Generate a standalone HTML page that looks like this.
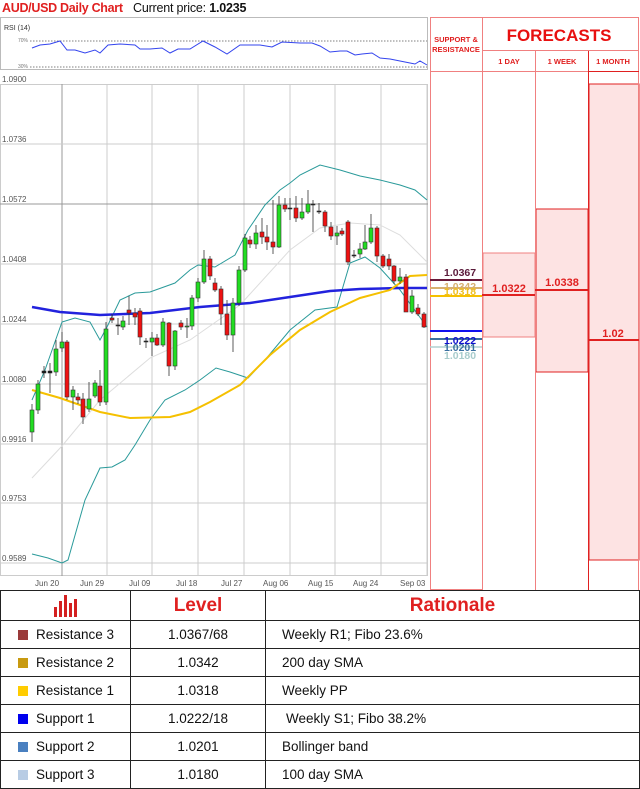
<!DOCTYPE html>
<html><head><meta charset="utf-8"><style>
*{margin:0;padding:0;box-sizing:border-box}
body{width:640px;height:787px;background:#fff;position:relative;overflow:hidden;font-family:"Liberation Sans",sans-serif}
.t{position:absolute;white-space:nowrap}
table{position:absolute;left:0;top:590px;width:640px;border-collapse:collapse;table-layout:fixed}
td{border:1px solid #222;height:28px;font-size:13.5px;color:#111;padding:0}
.sq{display:inline-block;width:10px;height:10px;margin:0 8px 0 17px;vertical-align:-1px}
</style></head><body>
<div class="t" style="left:2px;top:1px;font-size:12.5px;font-weight:bold;color:#e02020;letter-spacing:-0.3px">AUD/USD Daily Chart</div>
<div class="t" style="left:133px;top:1px;font-size:12.5px;color:#111;letter-spacing:-0.2px">Current price: <b>1.0235</b></div>

<svg width="640" height="590" style="position:absolute;left:0;top:0" font-family="Liberation Sans, sans-serif">
<rect x="0.5" y="17.5" width="427" height="52" fill="#fff" stroke="#bbb"/>
<text x="4" y="30" font-size="7" fill="#333">RSI (14)</text>
<text x="18" y="42" font-size="5" fill="#777">70%</text>
<text x="18" y="68" font-size="5" fill="#777">30%</text>
<line x1="30" y1="41" x2="427" y2="41" stroke="#555" stroke-dasharray="1.5,1.5" stroke-width="0.8"/>
<line x1="30" y1="67" x2="427" y2="67" stroke="#555" stroke-dasharray="1.5,1.5" stroke-width="0.8"/>
<polyline fill="none" stroke="#3344ee" stroke-width="1" points="32,48 40,45 50,44 60,41 67,50 75,50 85,53 95,50 100,53 108,45 120,44 135,45 140,49 150,49 162,48 170,53 178,49 190,49 203,41 215,47 227,54 240,45 260,45 272,47 282,42 300,43 312,43 320,46 330,52 340,51 347,51 355,55 362,54 372,53 380,58 390,59 400,61 410,63 415,64 420,61 427,65"/>
<rect x="0.5" y="84.5" width="427" height="491" fill="#fff" stroke="#ccc"/>
<g stroke="#ccc" stroke-width="1">
<line x1="62" y1="84" x2="62" y2="576" stroke="#999"/><line x1="107" y1="84" x2="107" y2="576"/><line x1="152" y1="84" x2="152" y2="576"/><line x1="198" y1="84" x2="198" y2="576"/><line x1="244" y1="84" x2="244" y2="576"/><line x1="290" y1="84" x2="290" y2="576"/><line x1="335" y1="84" x2="335" y2="576"/><line x1="381" y1="84" x2="381" y2="576"/><line x1="427" y1="84" x2="427" y2="576"/>
<line x1="0" y1="144" x2="428" y2="144"/><line x1="0" y1="204" x2="428" y2="204" stroke="#999"/><line x1="0" y1="264" x2="428" y2="264"/><line x1="0" y1="324" x2="428" y2="324"/><line x1="0" y1="384" x2="428" y2="384"/><line x1="0" y1="444" x2="428" y2="444"/><line x1="0" y1="503" x2="428" y2="503"/><line x1="0" y1="563" x2="428" y2="563"/>
</g>
<g font-size="8" fill="#555">
<text x="2" y="82">1.0900</text><text x="2" y="142">1.0736</text><text x="2" y="202">1.0572</text><text x="2" y="262">1.0408</text><text x="2" y="322">1.0244</text><text x="2" y="382">1.0080</text><text x="2" y="442">0.9916</text><text x="2" y="501">0.9753</text><text x="2" y="561">0.9589</text>
<text x="35" y="586">Jun 20</text><text x="80" y="586">Jun 29</text><text x="129" y="586">Jul 09</text><text x="176" y="586">Jul 18</text><text x="221" y="586">Jul 27</text><text x="263" y="586">Aug 06</text><text x="308" y="586">Aug 15</text><text x="353" y="586">Aug 24</text><text x="400" y="586">Sep 03</text>
</g>
<polyline fill="none" stroke="#ddd" stroke-width="1" points="32,478 62,446 100,400 150,358 190,340 240,305 290,250 320,228 350,223 380,225 400,235 427,262"/>
<polyline fill="none" stroke="#2a9a9a" stroke-width="1" points="32,400 45,370 62,322 75,318 90,322 100,340 107,327 120,300 135,293 150,292 175,283 190,270 198,265 215,267 235,255 248,230 265,205 280,190 290,183 300,175 320,165 340,170 360,176 380,180 400,185 415,190 427,200"/>
<polyline fill="none" stroke="#2a9a9a" stroke-width="1" points="32,554 48,558 62,563 68,560 85,500 100,468 112,467 125,460 135,445 150,420 165,400 185,390 200,380 216,368 230,372 248,378 265,360 290,330 315,310 337,307 350,263 365,257 380,268 400,290 427,327"/>
<polyline fill="none" stroke="#2222dd" stroke-width="2.5" points="32,307 60,312 100,315 150,313 200,307 250,303 290,297 330,291 360,289 400,288 427,288"/>
<polyline fill="none" stroke="#f5c000" stroke-width="2" points="32,390 60,398 100,412 130,418 170,417 190,412 210,402 240,385 270,355 300,330 330,312 360,298 390,290 410,276 427,275"/>
<g stroke="#333" stroke-width="0.8">
<line x1="32" y1="404" x2="32" y2="442"/><line x1="38" y1="380" x2="38" y2="414"/><line x1="44" y1="366" x2="44" y2="378"/><line x1="50" y1="363" x2="50" y2="393"/><line x1="56" y1="340" x2="56" y2="376"/><line x1="62" y1="332" x2="62" y2="352"/><line x1="67" y1="340" x2="67" y2="400"/><line x1="73" y1="386" x2="73" y2="410"/><line x1="78" y1="393" x2="78" y2="404"/><line x1="83" y1="393" x2="83" y2="424"/><line x1="89" y1="382" x2="89" y2="412"/><line x1="95" y1="380" x2="95" y2="398"/><line x1="100" y1="370" x2="100" y2="406"/><line x1="106" y1="322" x2="106" y2="405"/><line x1="112" y1="314" x2="112" y2="323"/><line x1="118" y1="318" x2="118" y2="335"/><line x1="123" y1="316" x2="123" y2="330"/><line x1="129" y1="296" x2="129" y2="325"/><line x1="135" y1="308" x2="135" y2="325"/><line x1="140" y1="308" x2="140" y2="345"/><line x1="146" y1="338" x2="146" y2="348"/><line x1="152" y1="332" x2="152" y2="356"/><line x1="157" y1="334" x2="157" y2="346"/><line x1="163" y1="318" x2="163" y2="347"/><line x1="169" y1="322" x2="169" y2="376"/><line x1="175" y1="330" x2="175" y2="370"/><line x1="181" y1="320" x2="181" y2="330"/><line x1="187" y1="318" x2="187" y2="338"/><line x1="192" y1="295" x2="192" y2="330"/><line x1="198" y1="278" x2="198" y2="302"/><line x1="204" y1="250" x2="204" y2="284"/><line x1="210" y1="256" x2="210" y2="280"/><line x1="215" y1="278" x2="215" y2="292"/><line x1="221" y1="286" x2="221" y2="325"/><line x1="227" y1="300" x2="227" y2="340"/><line x1="233" y1="298" x2="233" y2="352"/><line x1="239" y1="266" x2="239" y2="306"/><line x1="245" y1="234" x2="245" y2="272"/><line x1="250" y1="236" x2="250" y2="248"/><line x1="256" y1="225" x2="256" y2="249"/><line x1="262" y1="218" x2="262" y2="244"/><line x1="267" y1="225" x2="267" y2="250"/><line x1="273" y1="200" x2="273" y2="254"/><line x1="279" y1="196" x2="279" y2="248"/><line x1="285" y1="198" x2="285" y2="212"/><line x1="290" y1="198" x2="290" y2="220"/><line x1="296" y1="196" x2="296" y2="222"/><line x1="302" y1="198" x2="302" y2="220"/><line x1="308" y1="190" x2="308" y2="214"/><line x1="313" y1="200" x2="313" y2="232"/><line x1="319" y1="203" x2="319" y2="214"/><line x1="325" y1="210" x2="325" y2="232"/><line x1="331" y1="222" x2="331" y2="240"/><line x1="337" y1="226" x2="337" y2="245"/><line x1="342" y1="228" x2="342" y2="236"/><line x1="348" y1="220" x2="348" y2="265"/><line x1="354" y1="250" x2="354" y2="258"/><line x1="360" y1="243" x2="360" y2="258"/><line x1="365" y1="225" x2="365" y2="250"/><line x1="371" y1="214" x2="371" y2="244"/><line x1="377" y1="226" x2="377" y2="262"/><line x1="383" y1="254" x2="383" y2="268"/><line x1="389" y1="254" x2="389" y2="270"/><line x1="394" y1="265" x2="394" y2="284"/><line x1="400" y1="268" x2="400" y2="284"/><line x1="406" y1="274" x2="406" y2="312"/><line x1="412" y1="290" x2="412" y2="314"/><line x1="418" y1="304" x2="418" y2="316"/><line x1="424" y1="312" x2="424" y2="328"/>
</g>
<g stroke="#333" stroke-width="0.6">
<rect x="30" y="410" width="4" height="22" fill="#22dd22"/><rect x="36" y="384" width="4" height="26" fill="#22dd22"/><rect x="42" y="371" width="4" height="2" fill="#111"/><rect x="48" y="371" width="4" height="2" fill="#111"/><rect x="54" y="349" width="4" height="23" fill="#22dd22"/><rect x="60" y="342" width="4" height="6" fill="#22dd22"/><rect x="65" y="342" width="4" height="55" fill="#ee1111"/><rect x="71" y="390" width="4" height="7" fill="#22dd22"/><rect x="76" y="397" width="4" height="3" fill="#ee1111"/><rect x="81" y="399" width="4" height="18" fill="#ee1111"/><rect x="87" y="399" width="4" height="10" fill="#22dd22"/><rect x="93" y="383" width="4" height="13" fill="#22dd22"/><rect x="98" y="386" width="4" height="16" fill="#ee1111"/><rect x="104" y="329" width="4" height="73" fill="#22dd22"/><rect x="110" y="318" width="4" height="2" fill="#ee1111"/><rect x="116" y="325" width="4" height="1" fill="#111"/><rect x="121" y="321" width="4" height="6" fill="#22dd22"/><rect x="127" y="310" width="4" height="3" fill="#ee1111"/><rect x="133" y="313" width="4" height="4" fill="#ee1111"/><rect x="138" y="311" width="4" height="26" fill="#ee1111"/><rect x="144" y="341" width="4" height="1" fill="#111"/><rect x="150" y="338" width="4" height="4" fill="#22dd22"/><rect x="155" y="338" width="4" height="7" fill="#ee1111"/><rect x="161" y="322" width="4" height="23" fill="#22dd22"/><rect x="167" y="323" width="4" height="43" fill="#ee1111"/><rect x="173" y="331" width="4" height="35" fill="#22dd22"/><rect x="179" y="323" width="4" height="4" fill="#ee1111"/><rect x="185" y="326" width="4" height="1" fill="#22dd22"/><rect x="190" y="298" width="4" height="28" fill="#22dd22"/><rect x="196" y="282" width="4" height="16" fill="#22dd22"/><rect x="202" y="259" width="4" height="23" fill="#22dd22"/><rect x="208" y="259" width="4" height="17" fill="#ee1111"/><rect x="213" y="283" width="4" height="7" fill="#ee1111"/><rect x="219" y="289" width="4" height="25" fill="#ee1111"/><rect x="225" y="314" width="4" height="21" fill="#ee1111"/><rect x="231" y="303" width="4" height="32" fill="#22dd22"/><rect x="237" y="270" width="4" height="33" fill="#22dd22"/><rect x="243" y="238" width="4" height="32" fill="#22dd22"/><rect x="248" y="240" width="4" height="4" fill="#ee1111"/><rect x="254" y="233" width="4" height="11" fill="#22dd22"/><rect x="260" y="232" width="4" height="5" fill="#ee1111"/><rect x="265" y="237" width="4" height="5" fill="#ee1111"/><rect x="271" y="242" width="4" height="5" fill="#ee1111"/><rect x="277" y="205" width="4" height="42" fill="#22dd22"/><rect x="283" y="205" width="4" height="4" fill="#ee1111"/><rect x="288" y="208" width="4" height="1" fill="#111"/><rect x="294" y="208" width="4" height="10" fill="#ee1111"/><rect x="300" y="212" width="4" height="6" fill="#22dd22"/><rect x="306" y="204" width="4" height="8" fill="#22dd22"/><rect x="311" y="204" width="4" height="1" fill="#111"/><rect x="317" y="211" width="4" height="1" fill="#111"/><rect x="323" y="212" width="4" height="14" fill="#ee1111"/><rect x="329" y="227" width="4" height="9" fill="#ee1111"/><rect x="335" y="233" width="4" height="3" fill="#22dd22"/><rect x="340" y="231" width="4" height="3" fill="#ee1111"/><rect x="346" y="222" width="4" height="40" fill="#ee1111"/><rect x="352" y="255" width="4" height="1" fill="#111"/><rect x="358" y="249" width="4" height="5" fill="#22dd22"/><rect x="363" y="242" width="4" height="7" fill="#22dd22"/><rect x="369" y="228" width="4" height="14" fill="#22dd22"/><rect x="375" y="228" width="4" height="28" fill="#ee1111"/><rect x="381" y="256" width="4" height="10" fill="#ee1111"/><rect x="387" y="259" width="4" height="7" fill="#ee1111"/><rect x="392" y="266" width="4" height="15" fill="#ee1111"/><rect x="398" y="277" width="4" height="4" fill="#22dd22"/><rect x="404" y="277" width="4" height="35" fill="#ee1111"/><rect x="410" y="296" width="4" height="16" fill="#22dd22"/><rect x="416" y="308" width="4" height="6" fill="#ee1111"/><rect x="422" y="314" width="4" height="13" fill="#ee1111"/>
</g>
<rect x="483" y="253" width="52" height="84" fill="#fde3e3" stroke="#f08080"/>
<rect x="536" y="209" width="52" height="163" fill="#fde3e3" stroke="#e02020"/>
<rect x="589" y="84" width="50" height="476" fill="#fde3e3" stroke="#e02020"/>
<g stroke="#f08080" fill="none">
<rect x="430.5" y="17.5" width="52" height="572"/>
<line x1="482.5" y1="17" x2="482.5" y2="590"/><line x1="535.5" y1="50" x2="535.5" y2="590"/><line x1="588.5" y1="50" x2="588.5" y2="590" stroke="#e02020"/><line x1="638.5" y1="17" x2="638.5" y2="590"/>
<line x1="482" y1="17.5" x2="639" y2="17.5"/><line x1="482" y1="50.5" x2="639" y2="50.5"/><line x1="430" y1="71.5" x2="639" y2="71.5"/>
</g>
<line x1="588" y1="71.5" x2="639" y2="71.5" stroke="#e02020"/>
<text x="456" y="42" font-size="7.5" font-weight="bold" fill="#e02020" text-anchor="middle">SUPPORT &amp;</text>
<text x="456" y="52" font-size="7.5" font-weight="bold" fill="#e02020" text-anchor="middle">RESISTANCE</text>
<text x="559" y="41" font-size="17" font-weight="bold" fill="#e81010" text-anchor="middle">FORECASTS</text>
<g font-size="7.5" font-weight="bold" fill="#e02020" text-anchor="middle"><text x="509" y="64">1 DAY</text><text x="562" y="64">1 WEEK</text><text x="613" y="64">1 MONTH</text></g>
<line x1="430" y1="280" x2="482" y2="280" stroke="#6a1a3a" stroke-width="2"/>
<line x1="430" y1="288" x2="482" y2="288" stroke="#d8b070" stroke-width="2"/>
<line x1="430" y1="296" x2="482" y2="296" stroke="#f5c000" stroke-width="2"/>
<line x1="430" y1="331" x2="482" y2="331" stroke="#1010ee" stroke-width="2"/>
<line x1="430" y1="339" x2="482" y2="339" stroke="#3a70a0" stroke-width="2"/>
<line x1="430" y1="347" x2="482" y2="347" stroke="#b0d0d0" stroke-width="1.5"/>
<g font-size="10.5" font-weight="bold">
<text x="444" y="276" fill="#5a1a3a">1.0367</text><text x="444" y="290" fill="#d8b070">1.0342</text><text x="444" y="295" fill="#f0c020">1.0318</text>
<text x="444" y="344" fill="#1010cc">1.0222</text><text x="444" y="351" fill="#3a70a0">1.0201</text><text x="444" y="359" fill="#a8cccc">1.0180</text>
</g>
<line x1="482" y1="295" x2="535" y2="295" stroke="#e02020" stroke-width="2"/>
<line x1="535" y1="290" x2="588" y2="290" stroke="#e02020" stroke-width="2"/>
<line x1="588" y1="340" x2="639" y2="340" stroke="#e02020" stroke-width="2"/>
<g font-size="11" font-weight="bold" fill="#e02020" text-anchor="middle"><text x="509" y="292">1.0322</text><text x="562" y="286">1.0338</text><text x="613" y="337">1.02</text></g>
</svg>

<table>
<colgroup><col style="width:130px"><col style="width:135px"><col></colgroup>
<tr><td style="text-align:center;height:30px"><svg width="26" height="22" viewBox="0 0 26 22" style="vertical-align:middle"><g fill="#d42020"><rect x="1" y="12" width="3" height="10"/><rect x="6" y="6" width="3" height="16"/><rect x="11" y="0" width="3" height="22"/><rect x="16" y="8" width="3" height="14"/><rect x="21" y="4" width="3" height="18"/></g></svg></td>
<td style="text-align:center;font-size:19px;font-weight:bold;color:#e02020">Level</td>
<td style="text-align:center;font-size:19px;font-weight:bold;color:#e02020">Rationale</td></tr>
<tr><td><span class="sq" style="background:#9a3a3a"></span>Resistance 3</td><td style="text-align:center">1.0367/68</td><td style="padding-left:16px">Weekly R1; Fibo 23.6%</td></tr>
<tr><td><span class="sq" style="background:#c89a10"></span>Resistance 2</td><td style="text-align:center">1.0342</td><td style="padding-left:16px">200 day SMA</td></tr>
<tr><td><span class="sq" style="background:#ffcc00"></span>Resistance 1</td><td style="text-align:center">1.0318</td><td style="padding-left:16px">Weekly PP</td></tr>
<tr><td><span class="sq" style="background:#0000ee"></span>Support 1</td><td style="text-align:center">1.0222/18</td><td style="padding-left:20px">Weekly S1; Fibo 38.2%</td></tr>
<tr><td><span class="sq" style="background:#4a80c0"></span>Support 2</td><td style="text-align:center">1.0201</td><td style="padding-left:16px">Bollinger band</td></tr>
<tr><td style="height:27px"><span class="sq" style="background:#b8cce4"></span>Support 3</td><td style="text-align:center">1.0180</td><td style="padding-left:16px">100 day SMA</td></tr>
</table>
</body></html>
